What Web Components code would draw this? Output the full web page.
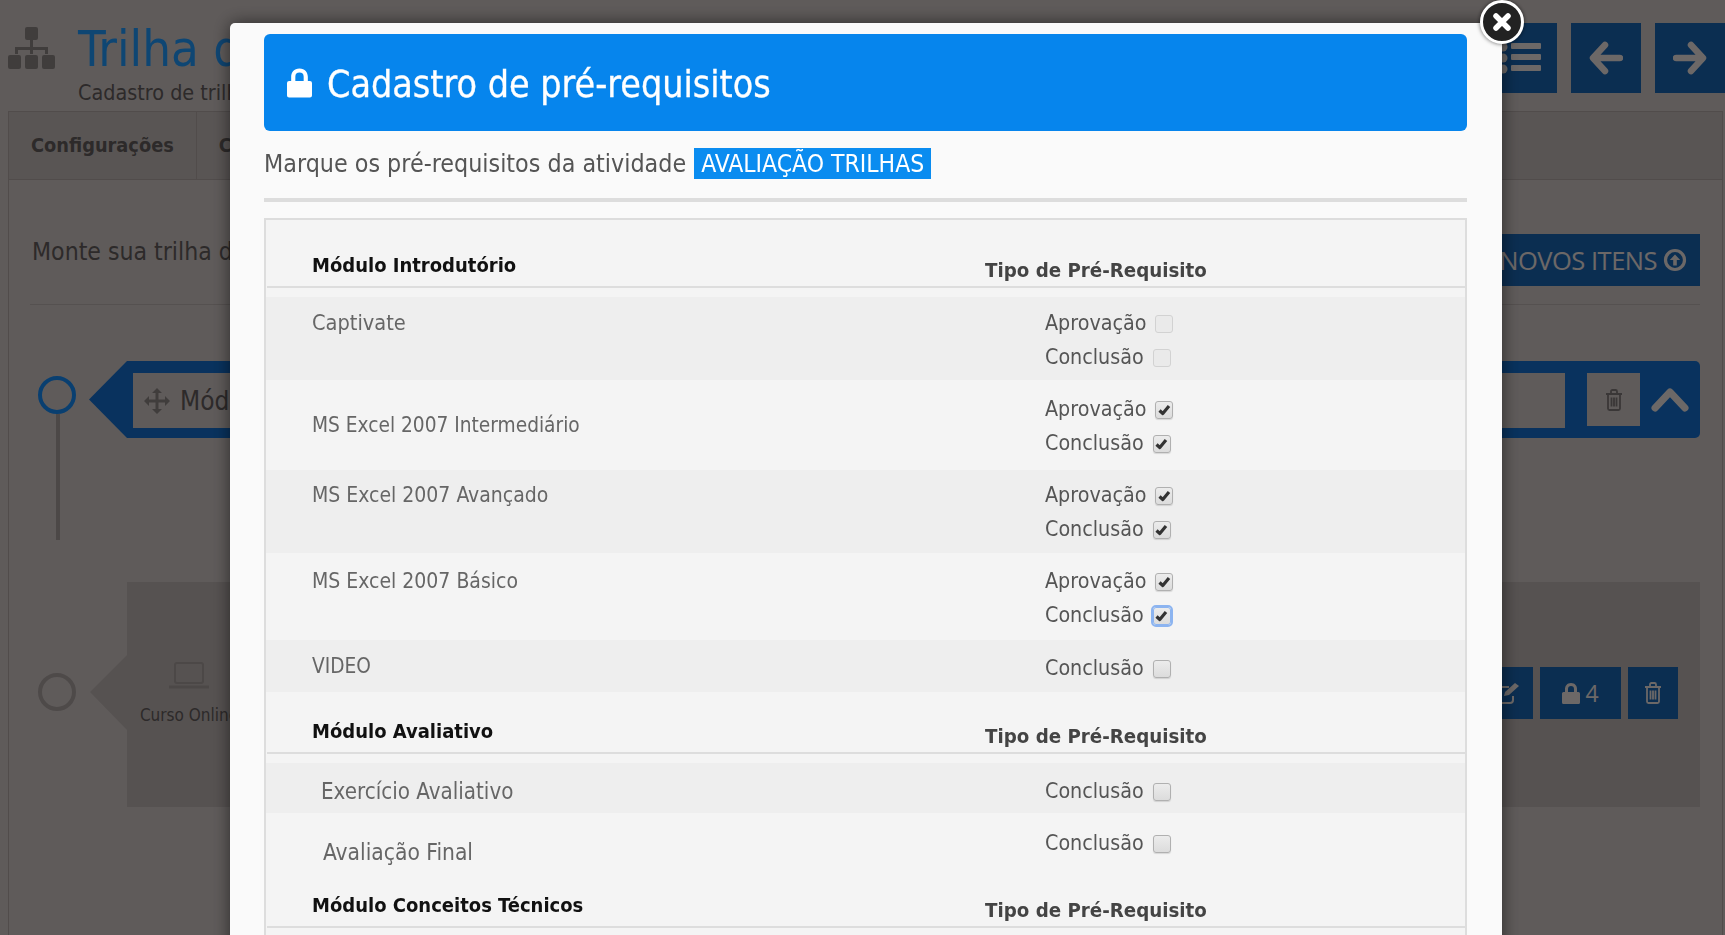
<!DOCTYPE html>
<html lang="pt-BR">
<head>
<meta charset="utf-8">
<title>Cadastro de pré-requisitos</title>
<style>
  html, body { margin: 0; height: 935px; overflow: hidden; }
  body { background: #d3cac8; font-family: "DejaVu Sans Condensed", "DejaVu Sans", sans-serif; }
</style>
</head>
<body>

<trail-page>
  <trail-module name="Módulo Introdutório"></trail-module>
  <trail-activity name="Curso Online"></trail-activity>
</trail-page>

<req-modal heading="Cadastro de pré-requisitos" activity="AVALIAÇÃO TRILHAS">
  <req-head name="Módulo Introdutório"></req-head>
  <req-row name="Captivate" odd style="--pt:9px;--pb:6px;--name-size:21.6px">
    <req-check label="Aprovação" disabled></req-check>
    <req-check label="Conclusão" disabled></req-check>
  </req-row>
  <req-row name="MS Excel 2007 Intermediário" middle style="--pt:12px;--pb:10px;--name-top:-3px">
    <req-check label="Aprovação" checked></req-check>
    <req-check label="Conclusão" checked></req-check>
  </req-row>
  <req-row name="MS Excel 2007 Avançado" odd style="--pt:8px;--pb:7px;--name-size:21px">
    <req-check label="Aprovação" checked></req-check>
    <req-check label="Conclusão" checked></req-check>
  </req-row>
  <req-row name="MS Excel 2007 Básico" style="--pt:11px;--pb:8px;--name-size:21px">
    <req-check label="Aprovação" checked></req-check>
    <req-check label="Conclusão" checked focused></req-check>
  </req-row>
  <req-row name="VIDEO" odd style="--pt:11px;--pb:7px;--name-top:-2px">
    <req-check label="Conclusão"></req-check>
  </req-row>
  <req-head name="Módulo Avaliativo" style="--head-h:62px"></req-head>
  <req-row name="Exercício Avaliativo" odd style="--pt:11px;--pb:5px;--indent:9px;--name-size:22.2px">
    <req-check label="Conclusão"></req-check>
  </req-row>
  <req-row name="Avaliação Final" style="--pt:13px;--pb:4px;--indent:11px;--name-top:9px;--name-size:22.6px">
    <req-check label="Conclusão"></req-check>
  </req-row>
  <req-head name="Módulo Conceitos Técnicos" style="--head-h:55px"></req-head>
</req-modal>

<script>
const ICONS = {
  sitemap: '<svg width="47" height="42" viewBox="0 0 47 42" fill="currentColor"><rect x="17" y="0" width="13" height="13" rx="2"/><path d="M22 13h3v7h15v7h-3v-4H25v4h-3v-4H10v4H7v-7h15z"/><rect x="0" y="28" width="13" height="14" rx="2"/><rect x="17" y="28" width="13" height="14" rx="2"/><rect x="34" y="28" width="13" height="14" rx="2"/></svg>',
  list: '<svg width="44" height="32" viewBox="0 0 44 32" fill="currentColor"><circle cx="6" cy="5" r="4.5"/><circle cx="6" cy="16" r="4.5"/><circle cx="6" cy="27" r="4.5"/><rect x="14" y="1" width="30" height="6" rx="1"/><rect x="14" y="12" width="30" height="6" rx="1"/><rect x="14" y="23" width="30" height="6" rx="1"/></svg>',
  left: '<svg width="34" height="34" viewBox="0 0 34 34" fill="none" stroke="currentColor" stroke-width="6.5" stroke-linecap="round" stroke-linejoin="round"><path d="M16 4 4 17l12 13M5 17h26"/></svg>',
  right: '<svg width="34" height="34" viewBox="0 0 34 34" fill="none" stroke="currentColor" stroke-width="6.5" stroke-linecap="round" stroke-linejoin="round"><path d="M18 4l12 13-12 13M29 17H3"/></svg>',
  up: '<svg width="24" height="24" viewBox="0 0 24 24"><circle cx="12" cy="12" r="9.5" fill="none" stroke="currentColor" stroke-width="3.2"/><path d="M12 6.5 6.8 12h3.4v5.5h3.6V12h3.4z" fill="currentColor"/></svg>',
  move: '<svg width="26" height="26" viewBox="0 0 26 26" fill="currentColor"><path d="M13 0l5 5h-3.500v6.500H21V8l5 5-5 5v-3.500h-6.500V21H18l-5 5-5-5h3.500v-6.500H5V18l-5-5 5-5v3.500h6.500V5H8z"/></svg>',
  trash: '<svg width="18" height="22" viewBox="0 0 18 22" fill="none" stroke="currentColor" stroke-width="1.800"><path d="M1 5h16M3 5v14.500q0 1.500 1.500 1.500h9q1.500 0 1.500-1.500V5M6 5V2.500Q6 1 7.500 1h3Q12 1 12 2.500V5M6.500 8.500v9M9 8.500v9M11.500 8.500v9"/></svg>',
  chevron: '<svg width="38" height="26" viewBox="0 0 38 26" fill="none" stroke="currentColor" stroke-width="7" stroke-linecap="round" stroke-linejoin="round"><path d="M4 21 19 5l15 16"/></svg>',
  edit: '<svg width="26" height="22" viewBox="0 0 26 22" fill="none" stroke="currentColor" stroke-width="2"><path d="M18 14v4q0 3-3 3H4q-3 0-3-3V8q0-3 3-3h10"/><path d="M9 14l1-4L20 1l4 3-10 9z" fill="currentColor" stroke="none"/></svg>',
  lock: '<svg width="18" height="21" viewBox="0 0 18 21" fill="currentColor"><path d="M9 0C5 0 3 3 3 6v3H1.500Q0 9 0 10.500v9Q0 21 1.500 21h15q1.500 0 1.500-1.500v-9Q18 9 16.500 9H15V6c0-3-2-6-6-6zM6 9V6c0-2 1-3 3-3s3 1 3 3v3z"/></svg>',
  laptop: '<svg width="40" height="28" viewBox="0 0 40 28" fill="none" stroke="currentColor" stroke-width="2"><rect x="6" y="1" width="28" height="20" rx="2"/><path d="M0 25h40" stroke-width="3"/></svg>',
};

class TrailPage extends HTMLElement {
  constructor() {
    super();
    this.attachShadow({ mode: "open" });
    this.shadowRoot.innerHTML = `
      <style>
        :host { display: block; height: 935px; overflow: hidden; color: #645d5d; }
        * { box-sizing: border-box; }
        .top { display: flex; height: 111px; padding: 23px 0 0 8px; }
        .mark { color: #8f8886; margin: 4px 23px 0 0; }
        h1 { margin: 2px 0 0; font-size: 50.5px; line-height: 48px; font-weight: 400; color: #219bff; white-space: nowrap; }
        .sub { font-size: 21.4px; line-height: 24px; margin-top: 8px; white-space: nowrap; }
        .nav { margin-left: auto; display: flex; gap: 14px; }
        .nav span { width: 70px; height: 70px; background: #1a66b4; color: #f0e7e5; display: flex; align-items: center; justify-content: center; }
        .nav span:first-child svg { margin-left: -6px; }
        .shell { margin: 0 2px 0 8px; border: 1px solid #b3a9a7; border-bottom: 0; height: 824px; }
        .tabs { display: flex; height: 68px; background: #c6bdbb; border-bottom: 1px solid #b3a9a7; font-weight: 700; font-size: 19.8px; line-height: 68px; }
        .tabs span { padding: 0 22px; border-right: 1px solid #b3a9a7; }
        .panel { padding: 54px 22px 0 21px; }
        .intro { display: flex; justify-content: space-between; height: 71px; border-bottom: 1px solid #bdb3b1; font-size: 24.6px; }
        .intro p { margin: 1px 0 0 2px; line-height: 34px; }
        .add { height: 52px; padding: 0 13px 0 60px; background: #1a66b4; color: #f0e7e5; font: 25.5px/52px "Open Sans", sans-serif; display: flex; align-items: center; gap: 6px; letter-spacing: -.5px; }
        .add svg { display: block; }
        ::slotted(trail-module) { margin-top: 56px; }
      </style>
      <div class="top">
        <div class="mark">${ICONS.sitemap}</div>
        <div><h1>Trilha de aprendizagem</h1><div class="sub">Cadastro de trilha</div></div>
        <div class="nav"><span>${ICONS.list}</span><span>${ICONS.left}</span><span>${ICONS.right}</span></div>
      </div>
      <div class="shell">
        <div class="tabs"><span>Configurações</span><span>Conteúdo</span></div>
        <div class="panel">
          <div class="intro"><p>Monte sua trilha de aprendizagem</p><div class="add">NOVOS ITENS ${ICONS.up}</div></div>
          <slot></slot>
        </div>
      </div>`;
  }
}

class TrailModule extends HTMLElement {
  connectedCallback() {
    this.attachShadow({ mode: "open" }).innerHTML = `
      <style>
        :host { display: flex; height: 179px; }
        * { box-sizing: border-box; }
        .rail { width: 59px; padding: 15px 0 0 8px; }
        .dot { width: 38px; height: 38px; border: 4px solid #168cf9; border-radius: 50%; }
        .line { width: 4px; height: 126px; margin: 0 0 0 18px; background: #a89f9d; }
        .bar { flex: 1; height: 77px; display: flex; align-items: flex-start; border-radius: 0 5px 5px 0; padding: 12px 0 0 44px; background: #1470d0; clip-path: polygon(38px 0, 100% 0, 100% 100%, 38px 100%, 0 50%); }
        .field { flex: 1; height: 55px; background: #d3cac8; display: flex; align-items: center; padding-left: 11px; gap: 10px; font-size: 26px; color: #645d5d; }
        .field svg { color: #8f8886; }
        .del { width: 53px; height: 53px; margin-left: 22px; background: #d3cac8; color: #817a7a; display: flex; align-items: center; justify-content: center; }
        .up { width: 60px; height: 53px; color: #f0e7e5; display: flex; align-items: center; justify-content: center; }
      </style>
      <div class="rail"><div class="dot"></div><div class="line"></div></div>
      <div class="bar">
        <div class="field">${ICONS.move}<span>${this.getAttribute("name")}</span></div>
        <div class="del">${ICONS.trash}</div>
        <div class="up">${ICONS.chevron}</div>
      </div>`;
  }
}

class TrailActivity extends HTMLElement {
  connectedCallback() {
    this.attachShadow({ mode: "open" }).innerHTML = `
      <style>
        :host { display: flex; height: 225px; margin-top: 42px; }
        * { box-sizing: border-box; }
        .rail { width: 60px; padding: 91px 0 0 8px; }
        .dot { width: 38px; height: 38px; border: 4px solid #ada4a3; border-radius: 50%; }
        .card { flex: 1; background: #bfb6b4; display: flex; padding-left: 37px; clip-path: polygon(37px 0, 100% 0, 100% 100%, 37px 100%, 37px 148px, 0 110px, 37px 73px); }
        .type { width: 124px; padding-top: 80px; text-align: center; font-size: 17px; color: #645d5d; white-space: nowrap; }
        .type svg { display: block; margin: 0 auto 15px; color: #a89f9d; }
        .acts { margin: 85px 22px 0 auto; display: flex; gap: 7px; height: 52px; }
        .acts span { background: #1a66b4; color: #f0e7e5; display: flex; align-items: center; justify-content: center; gap: 5px; font: 23px "Open Sans", sans-serif; width: 50px; }
        .acts .wide { width: 81px; }
      </style>
      <div class="rail"><div class="dot"></div></div>
      <div class="card">
        <div class="type">${ICONS.laptop}${this.getAttribute("name")}</div>
        <div class="acts"><span>${ICONS.edit}</span><span class="wide">${ICONS.lock}4</span><span>${ICONS.trash}</span></div>
      </div>`;
  }
}

class ReqModal extends HTMLElement {
  connectedCallback() {
    this.attachShadow({ mode: "open" }).innerHTML = `
      <style>
        :host { display: block; position: fixed; inset: 0; overflow: hidden; background: rgba(0, 0, 0, .55); }
        * { box-sizing: border-box; }
        .box { position: relative; width: 1272px; height: 960px; margin: 23px 0 0 230px; padding: 11px 35px 0 34px; background: #fafafa; border-radius: 5px 5px 0 0; box-shadow: 0 0 18px rgba(0, 0, 0, .55); }
        .close { position: absolute; top: -23px; right: -22px; width: 44px; height: 44px; border-radius: 50%; background: #222; border: 3px solid #fff; box-shadow: 0 0 4px rgba(0, 0, 0, .6); display: flex; align-items: center; justify-content: center; }
        header { height: 97px; background: #0685ed; border-radius: 6px; color: #fff; display: flex; align-items: center; padding-left: 23px; gap: 15px; }
        h2 { margin: 2px 0 0; font-size: 37.3px; font-weight: 400; line-height: 40px; -webkit-text-stroke: .3px #fff; }
        .lead { display: flex; align-items: center; gap: 8px; height: 71px; font-size: 24.8px; color: #555; border-bottom: 4px solid #ddd; padding-bottom: 2px; }
        .tag { background: #0a8cf0; color: #fff; padding: 0 7px; line-height: 31px; font-size: 24.5px; }
        .table { margin-top: 16px; border: 2px solid #ddd; border-bottom: 0; background: #f4f4f4; padding-top: 1px; }
      </style>
      <div class="box">
        <div class="close"><svg width="20" height="20" viewBox="0 0 20 20" fill="none" stroke="#fff" stroke-width="5.500" stroke-linecap="round"><path d="M4 4l12 12M16 4 4 16"/></svg></div>
        <header><svg width="25" height="30" viewBox="0 0 18 21" fill="#fff"><path d="M9 0C5 0 3 3 3 6v3H1.500Q0 9 0 10.500v9Q0 21 1.500 21h15q1.500 0 1.500-1.500v-9Q18 9 16.500 9H15V6c0-3-2-6-6-6zM6 9V6c0-2 1-3 3-3s3 1 3 3v3z"/></svg><h2>${this.getAttribute("heading")}</h2></header>
        <div class="lead"><span>Marque os pré-requisitos da atividade</span><span class="tag">${this.getAttribute("activity")}</span></div>
        <div class="table"><slot></slot></div>
      </div>`;
  }
}

class ReqHead extends HTMLElement {
  connectedCallback() {
    this.attachShadow({ mode: "open" }).innerHTML = `
      <style>
        :host { display: block; padding-bottom: 9px; }
        .in { box-sizing: border-box; height: var(--head-h, 67px); margin-left: 1px; border-bottom: 2px solid #ddd; display: grid; grid-template-columns: 673px 1fr; align-items: end; padding-left: 45px; font-size: 20px; font-weight: 700; }
        .a { color: #111; padding-bottom: 9px; }
        .b { color: #444; padding-bottom: 4px; font-size: 20.3px; }
      </style>
      <div class="in"><div class="a">${this.getAttribute("name")}</div><div class="b">Tipo de Pré-Requisito</div></div>`;
  }
}

class ReqRow extends HTMLElement {
  connectedCallback() {
    const middle = this.hasAttribute("middle");
    this.attachShadow({ mode: "open" }).innerHTML = `
      <style>
        :host { display: grid; grid-template-columns: 779px 1fr; padding: var(--pt) 0 var(--pb); }
        :host([odd]) { background: #eee; }
        .name { padding-left: calc(46px + var(--indent, 0px)); margin-top: var(--name-top, 0); font-size: var(--name-size, 20.7px); line-height: 34px; color: #666; ${middle ? "align-self: center;" : ""} }
        .opts { display: flex; flex-direction: column; }
      </style>
      <div class="name">${this.getAttribute("name")}</div>
      <div class="opts"><slot></slot></div>`;
  }
}

class ReqCheck extends HTMLElement {
  connectedCallback() {
    this.attachShadow({ mode: "open" }).innerHTML = `
      <style>
        :host { display: flex; align-items: center; gap: 9px; height: 34px; font-size: 21.3px; color: #555; }
        .label { margin-top: -2px; }
        .box { box-sizing: border-box; width: 18px; height: 18px; border: 1.5px solid #b0b0b0; border-radius: 3px; background: linear-gradient(#ececec, #dcdcdc); box-shadow: 0 1px 1px rgba(0, 0, 0, .12); display: flex; align-items: center; justify-content: center; margin-top: 2px; }
        :host([disabled]) .box { border-color: #d2d2d2; background: #eaeaea; box-shadow: none; }
        :host([focused]) .box { outline: 2px solid #8cb4f0; border-color: #8cb4f0; }
      </style>
      <span class="label">${this.getAttribute("label")}</span>
      <span class="box">${this.hasAttribute("checked") ? '<svg width="13" height="12" viewBox="0 0 13 12" fill="none" stroke="#333" stroke-width="3.200" stroke-linejoin="round"><path d="M1.500 6.500 4.800 9.500 11 2"/></svg>' : ""}</span>`;
  }
}

customElements.define("trail-page", TrailPage);
customElements.define("trail-module", TrailModule);
customElements.define("trail-activity", TrailActivity);
customElements.define("req-modal", ReqModal);
customElements.define("req-head", ReqHead);
customElements.define("req-row", ReqRow);
customElements.define("req-check", ReqCheck);
</script>
</body>
</html>
